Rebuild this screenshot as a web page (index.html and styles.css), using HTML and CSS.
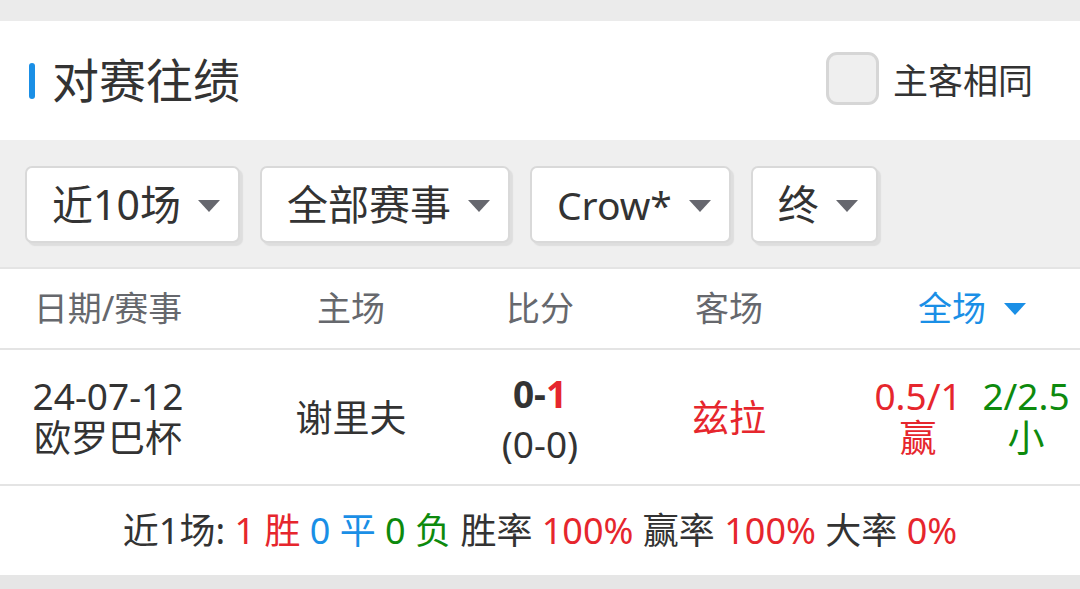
FILE: index.html
```html
<!DOCTYPE html>
<html lang="zh-CN">
<head>
<meta charset="utf-8">
<title>对赛往绩</title>
<link rel="stylesheet" href="styles.css">
</head>
<body>
<div class="page">
  <div class="top-gap"></div>
  <header class="section-head">
    <h2 class="title"><span class="bar"></span>对赛往绩</h2>
    <label class="same"><span class="box"></span><span>主客相同</span></label>
  </header>
  <div class="filters">
    <div class="select"><span>近10场</span><i class="caret"></i></div>
    <div class="select"><span>全部赛事</span><i class="caret"></i></div>
    <div class="select"><span class="latin">Crow*</span><i class="caret"></i></div>
    <div class="select"><span>终</span><i class="caret"></i></div>
  </div>
  <div class="table">
    <div class="row head">
      <div class="cell">日期/赛事</div>
      <div class="cell">主场</div>
      <div class="cell">比分</div>
      <div class="cell">客场</div>
      <div class="cell full">全场<i class="caret blue"></i></div>
    </div>
    <div class="row data">
      <div class="cell stack"><span>24-07-12</span><span>欧罗巴杯</span></div>
      <div class="cell">谢里夫</div>
      <div class="cell stack score-stack"><span class="score">0-<em class="red">1</em></span><span>(0-0)</span></div>
      <div class="cell red">兹拉</div>
      <div class="cell odds">
        <div class="stack red"><span>0.5/1</span><span>赢</span></div>
        <div class="stack green"><span>2/2.5</span><span>小</span></div>
      </div>
    </div>
  </div>
  <div class="summary"><p class="summary-text">近1场: <span class="red">1 胜</span> <span class="blue-t">0 平</span> <span class="green">0 负</span> 胜率 <span class="red">100%</span> 赢率 <span class="red">100%</span> 大率 <span class="red">0%</span></p></div>
  <div class="bottom-gap"></div>
</div>
</body>
</html>
```

FILE: styles.css
```css
* { box-sizing: border-box; }
html, body { margin: 0; padding: 0; }
body {
  background: #efefef;
  font-family: "Noto Sans", "Noto Sans CJK SC", sans-serif;
  color: #333;
}
.page { width: 1080px; height: 589px; overflow: hidden; display: flex; flex-direction: column; }
.top-gap { height: 21px; background: #ebebeb; flex: none; }
.section-head {
  height: 119px; background: #fff; flex: none;
  display: flex; align-items: center; justify-content: space-between;
  padding: 0 47px 0 29px;
}
.title {
  margin: 0; display: flex; align-items: center;
  font-size: 47px; font-weight: normal; color: #333; line-height: 1;
}
.bar { width: 6px; height: 36px; border-radius: 3px; background: #1a8fe6; margin-right: 17px; }
.same { display: flex; align-items: center; font-size: 35px; color: #333; margin-top: -4px; }
.box {
  width: 53px; height: 53px; border: 3px solid #d6d6d6; border-radius: 11px;
  background: #efefef; margin-right: 14px;
}
.filters {
  height: 127px; flex: none; background: #efefef;
  display: flex; align-items: flex-start; gap: 20px;
  padding: 26px 0 0 25px;
}
.select {
  height: 77px; background: #fff; border: 2px solid #d9d9d9; border-radius: 7px;
  box-shadow: 3px 3px 1px #dedede;
  display: flex; align-items: center; gap: 17px;
  padding: 0 18px 0 25px;
  font-size: 41px; color: #333; line-height: 1;
}
.latin { font-size: 39px; }
.caret {
  width: 0; height: 0; border-left: 11px solid transparent; border-right: 11px solid transparent;
  border-top: 12px solid #66676e; margin-top: 2px;
}
.caret.blue { border-top-color: #1a8fe6; margin-left: 18px; }
.table { background: #fff; flex: none; border-top: 2px solid #e4e4e4; }
.row {
  display: grid; grid-template-columns: 20fr 25fr 10fr 25fr 20fr;
  border-bottom: 2px solid #e4e4e4;
}
.row.head { height: 81px; font-size: 34px; color: #66686d; }
.row.data { height: 136px; font-size: 37px; color: #333; }
.cell { display: flex; align-items: center; justify-content: center; line-height: 1; }
.cell.full { color: #1a8fe6; }
.row.head .cell { padding-bottom: 2px; }
.stack { display: flex; flex-direction: column; align-items: center; justify-content: center; line-height: 42px; }
.score-stack { line-height: 50px; padding-top: 4px; }
.score { font-weight: bold; }
.odds { display: grid; grid-template-columns: 1fr 1fr; }
.odds .stack { height: 100%; }
em { font-style: normal; }
.red { color: #e6262d; }
.green { color: #0d8a0d; }
.blue-t { color: #1a8fe6; }
.summary {
  height: 89px; background: #fff; flex: none;
  display: flex; align-items: center; justify-content: center;
}
.summary-text { margin: 0; font-size: 36px; color: #333; white-space: pre; line-height: 1.2; }
.bottom-gap { flex: 1; background: #e6e6e6; }
```
